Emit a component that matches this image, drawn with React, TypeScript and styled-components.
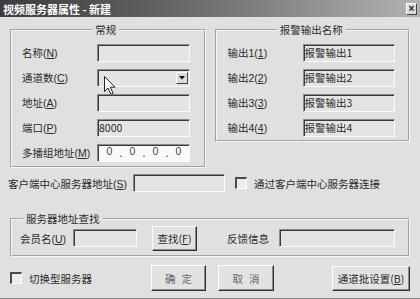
import React from "react";
import styled, { createGlobalStyle } from "styled-components";

const GlobalStyle = createGlobalStyle`
  html, body {
    margin: 0;
    padding: 0;
    background: #dedede;
  }
  body {
    font-family: "Liberation Sans", "Noto Sans CJK SC", sans-serif;
    font-size: 10.5px;
    color: #2a2a2a;
  }
`;

const Window = styled.div`
  width: 420px;
  height: 299px;
  box-sizing: border-box;
  background: #e0e0e0;
  display: flex;
  flex-direction: column;
  overflow: hidden;
  border-bottom: 1px solid #8a8a8a;
`;

const TitleBar = styled.div`
  height: 17px;
  flex: none;
  display: flex;
  align-items: center;
  justify-content: space-between;
  padding: 0 3px;
  background: linear-gradient(to right, #3c3c3c, #5e5e5e 35%, #b2b2b2);
`;

const TitleText = styled.span`
  color: #fff;
  font-weight: bold;
  font-size: 11px;
  font-family: "Noto Sans CJK SC", sans-serif;
`;

const CloseBox = styled.span`
  width: 9px;
  height: 10px;
  display: flex;
  align-items: center;
  justify-content: center;
  background: #dcdcdc;
  border-top: 1px solid #fff;
  border-left: 1px solid #fff;
  border-right: 1px solid #444;
  border-bottom: 1px solid #444;
  font-size: 10px;
  font-weight: bold;
  line-height: 1;
  color: #222;
`;

const Body = styled.div`
  flex: 1;
  display: flex;
  flex-direction: column;
  padding: 7px 10px 0;
`;

const TopRow = styled.div`
  display: flex;
  gap: 9px;
  align-items: flex-start;
`;

const Group = styled.fieldset<{ $w?: number; $pad: string }>`
  margin: 0;
  min-width: 0;
  box-sizing: border-box;
  width: ${(p) => (p.$w ? `${p.$w}px` : "auto")};
  border: 2px groove #f6f6f6;
  padding: ${(p) => p.$pad};
`;

const Legend = styled.legend<{ $center?: boolean }>`
  padding: 0 3px;
  line-height: 12px;
  font-family: "Noto Sans CJK SC", sans-serif;
  margin: ${(p) => (p.$center ? "0 auto" : "0 0 0 3px")};
`;

const FieldRow = styled.div`
  display: flex;
  align-items: center;
  height: 25px;
`;

const Label = styled.span<{ $w: number }>`
  width: ${(p) => p.$w}px;
  flex: none;
  white-space: nowrap;
`;

const TextBox = styled.div<{ $w: number; $white?: boolean }>`
  position: relative;
  width: ${(p) => p.$w}px;
  height: 18px;
  box-sizing: border-box;
  flex: none;
  display: flex;
  align-items: center;
  padding-left: 1px;
  background: ${(p) => (p.$white ? "#fafafa" : "#e4e4e4")};
  border-top: 1px solid #8a8a8a;
  border-left: 1px solid #8a8a8a;
  border-right: 1px solid #fbfbfb;
  border-bottom: 1px solid #fbfbfb;
  box-shadow: inset 1px 1px 0 #3a3a3a;
  white-space: nowrap;
  font-family: "Noto Sans CJK SC", sans-serif;
`;

const DropButton = styled.span`
  margin-left: auto;
  margin-right: 1px;
  width: 12px;
  height: 12px;
  box-sizing: border-box;
  display: flex;
  align-items: center;
  justify-content: center;
  background: #dcdcdc;
  border-top: 1px solid #fff;
  border-left: 1px solid #fff;
  border-right: 1px solid #444;
  border-bottom: 1px solid #444;
`;

const Pointer = styled.svg`
  position: absolute;
  left: 6px;
  top: 6px;
`;

const IpSeg = styled.span`
  width: 17px;
  text-align: center;
  font-family: "Liberation Sans", sans-serif;
  color: #444;
`;

const IpDot = styled.span`
  width: 6px;
  text-align: center;
  color: #444;
`;

const IpWrap = styled.div`
  display: flex;
  padding-left: 2px;
`;

const ClientRow = styled.div`
  display: flex;
  align-items: center;
  height: 20px;
  margin: 5px 0 0 -2px;
`;

const CheckLine = styled.label<{ $ml?: number; $w?: number }>`
  display: flex;
  align-items: center;
  gap: 7px;
  margin-left: ${(p) => p.$ml ?? 0}px;
  width: ${(p) => (p.$w ? `${p.$w}px` : "auto")};
  flex: none;
  white-space: nowrap;
`;

const CheckBox = styled.span`
  width: 9px;
  height: 9px;
  flex: none;
  background: #ececec;
  border-top: 2px solid #4a4a4a;
  border-left: 2px solid #4a4a4a;
  border-right: 1px solid #fff;
  border-bottom: 1px solid #fff;
`;

const SearchRow = styled.div`
  display: flex;
  align-items: center;
  height: 20px;
`;

const Button = styled.button<{ $w: number; $light?: boolean; $ml?: number }>`
  width: ${(p) => p.$w}px;
  height: ${(p) => (p.$light ? 26 : 25)}px;
  margin: 0 0 0 ${(p) => p.$ml ?? 0}px;
  padding: 0;
  flex: none;
  box-sizing: border-box;
  background: #e2e2e2;
  border-top: 1px solid #fff;
  border-left: 1px solid #fff;
  border-right: 1px solid #2e2e2e;
  border-bottom: 1px solid #2e2e2e;
  box-shadow: inset -1px -1px 0 #8c8c8c;
  font-family: "Noto Sans CJK SC", sans-serif;
  font-size: 10.5px;
  color: ${(p) => (p.$light ? "#666" : "#2a2a2a")};
  letter-spacing: ${(p) => (p.$light ? "6px" : "0")};
  text-indent: ${(p) => (p.$light ? "6px" : "0")};
  white-space: nowrap;
`;

const Footer = styled.div`
  display: flex;
  align-items: center;
  height: 26px;
  margin-top: 8px;
`;

const commonRows = [
  { label: "名称", key: "N" },
  { label: "通道数", key: "C", combo: true },
  { label: "地址", key: "A" },
  { label: "端口", key: "P", value: "8000" },
];

const alarmRows = [1, 2, 3, 4];

export default function App() {
  return (
    <Window>
      <GlobalStyle />
      <TitleBar>
        <TitleText>视频服务器属性 - 新建</TitleText>
        <CloseBox>×</CloseBox>
      </TitleBar>
      <Body>
        <TopRow>
          <Group $w={196} $pad="4px 14px 1px 10px">
            <Legend $center>常规</Legend>
            {commonRows.map((r) => (
              <FieldRow key={r.key}>
                <Label $w={75}>
                  {r.label}(<u>{r.key}</u>)
                </Label>
                <TextBox $w={93}>
                  {r.value}
                  {r.combo && (
                    <>
                      <DropButton>
                        <svg width="6" height="4" viewBox="0 0 6 4">
                          <path d="M0 0H6L3 3.5Z" fill="#111" />
                        </svg>
                      </DropButton>
                      <Pointer width="12" height="19" viewBox="0 0 12 19">
                        <path
                          d="M0.5 0.5V15.5L4 12L6.8 18.2L9 17.2L6.3 11.2H11Z"
                          fill="#fff"
                          stroke="#222"
                          strokeWidth="1"
                          strokeLinejoin="miter"
                        />
                      </Pointer>
                    </>
                  )}
                </TextBox>
              </FieldRow>
            ))}
            <FieldRow>
              <Label $w={75}>
                多播组地址(<u>M</u>)
              </Label>
              <TextBox $w={93} $white>
                <IpWrap>
                  <IpSeg>0</IpSeg>
                  <IpDot>.</IpDot>
                  <IpSeg>0</IpSeg>
                  <IpDot>.</IpDot>
                  <IpSeg>0</IpSeg>
                  <IpDot>.</IpDot>
                  <IpSeg>0</IpSeg>
                </IpWrap>
              </TextBox>
            </FieldRow>
          </Group>
          <Group $w={196} $pad="4px 13px 0 11px">
            <Legend $center>报警输出名称</Legend>
            {alarmRows.map((n) => (
              <FieldRow key={n}>
                <Label $w={75}>
                  输出{n}(<u>{n}</u>)
                </Label>
                <TextBox $w={92}>报警输出{n}</TextBox>
              </FieldRow>
            ))}
          </Group>
        </TopRow>

        <ClientRow>
          <Label $w={125}>
            客户端中心服务器地址(<u>S</u>)
          </Label>
          <TextBox $w={92} />
          <CheckLine $ml={10}>
            <CheckBox />
            通过客户端中心服务器连接
          </CheckLine>
        </ClientRow>

        <Group $pad="3px 13px 7px 8px" style={{ marginTop: 20 }}>
          <Legend>服务器地址查找</Legend>
          <SearchRow>
            <Label $w={53}>
              会员名(<u>U</u>)
            </Label>
            <TextBox $w={64} />
            <Button $w={45} $ml={15}>
              查找(<u>F</u>)
            </Button>
            <Label $w={52} style={{ marginLeft: 30 }}>
              反馈信息
            </Label>
            <TextBox $w={116} />
          </SearchRow>
        </Group>

        <Footer>
          <CheckLine $w={141}>
            <CheckBox />
            切换型服务器
          </CheckLine>
          <Button $w={55} $light>
            确定
          </Button>
          <Button $w={56} $light $ml={12}>
            取消
          </Button>
          <Button $w={78} style={{ marginLeft: "auto" }}>
            通道批设置(<u>B</u>)
          </Button>
        </Footer>
      </Body>
    </Window>
  );
}
